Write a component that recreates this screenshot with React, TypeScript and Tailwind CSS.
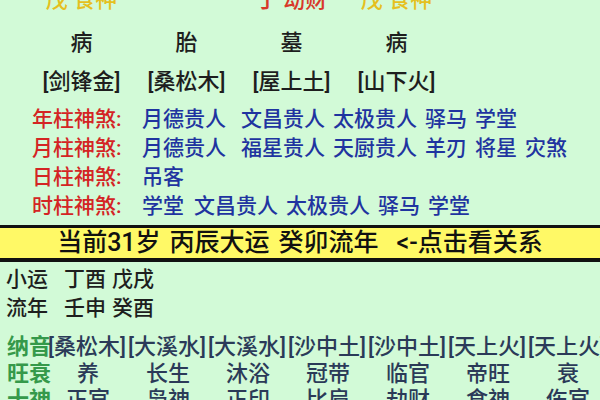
import React from "react";

const pillars = [
  { top: "戊 食神", topColor: "text-[#e5c01e]", state: "病", nayin: "[剑锋金]" },
  { top: "", topColor: "", state: "胎", nayin: "[桑松木]" },
  { top: "丁 劫财", topColor: "text-[#d8392a]", state: "墓", nayin: "[屋上土]" },
  { top: "戊 食神", topColor: "text-[#e5c01e]", state: "病", nayin: "[山下火]" },
];

const shensha = [
  { label: "年柱神煞:", items: ["月德贵人", "文昌贵人", "太极贵人", "驿马", "学堂"], first: "ml-[15px]" },
  { label: "月柱神煞:", items: ["月德贵人", "福星贵人", "天厨贵人", "羊刃", "将星", "灾煞"], first: "ml-[15px]" },
  { label: "日柱神煞:", items: ["吊客"], first: "ml-[15px]" },
  { label: "时柱神煞:", items: ["学堂", "文昌贵人", "太极贵人", "驿马", "学堂"], first: "ml-[10px]" },
];

const nayin = ["[桑松木]", "[大溪水]", "[大溪水]", "[沙中土]", "[沙中土]", "[天上火]", "[天上火]"];
const wangshuai = ["养", "长生", "沐浴", "冠带", "临官", "帝旺", "衰"];
const shishen = ["正官", "枭神", "正印", "比肩", "劫财", "食神", "伤官"];

function Words({ items, first }: { items: string[]; first: string }) {
  return (
    <>
      {items.map((w, i) => (
        <span key={i} className={i === 0 ? "" : i === 1 ? first : "ml-[8px]"}>
          {w}
        </span>
      ))}
    </>
  );
}

export default function App() {
  return (
    <div
      className="w-[600px] h-[400px] overflow-hidden bg-[#d2fad7] text-[#1e1e1e] font-medium"
      style={{ fontFamily: "Roboto, 'Noto Sans CJK SC', sans-serif" }}
    >
      {/* pillar summary */}
      <div className="grid grid-cols-[105px_105px_105px_105px] pl-[29px] mt-[-15px] h-[30px] leading-[30px] text-[22px]">
        {pillars.map((p, i) => (
          <div key={i} className={`text-center whitespace-pre ${p.topColor}`}>
            {p.top}
          </div>
        ))}
      </div>
      <div className="grid grid-cols-[105px_105px_105px_105px] pl-[29px] mt-[13px] h-[30px] leading-[30px] text-[22px]">
        {pillars.map((p, i) => (
          <div key={i} className="text-center">
            {p.state}
          </div>
        ))}
      </div>
      <div className="grid grid-cols-[105px_105px_105px_105px] pl-[29px] mt-[9px] h-[30px] leading-[30px] text-[22px]">
        {pillars.map((p, i) => (
          <div key={i} className="text-center">
            {p.nayin}
          </div>
        ))}
      </div>

      {/* shensha */}
      <div className="mt-[8px] text-[21px]">
        {shensha.map((s, i) => (
          <div key={i} className="flex h-[29px] leading-[29px] pl-[32px] whitespace-nowrap">
            <span className="w-[110px] text-[#d42424]">{s.label}</span>
            <span className="text-[#1f34a0]">
              <Words items={s.items} first={s.first} />
            </span>
          </div>
        ))}
      </div>

      {/* current luck banner */}
      <div className="mt-[4px] border-t-[3px] border-b-[4px] border-[#111] bg-[#fff966] h-[37px] flex justify-center items-center text-[25px] leading-[30px] text-[#111] whitespace-nowrap">
        <span>当前31岁</span>
        <span className="ml-[9px]">丙辰大运</span>
        <span className="ml-[9px]">癸卯流年</span>
        <span className="ml-[18px]">&lt;-点击看关系</span>
      </div>

      <div className="mt-[3px] pl-[6px] text-[21px]">
        <div className="flex h-[29px] leading-[29px]">
          <span className="w-[42px]">小运</span>
          <span className="ml-[16px]">丁酉</span>
          <span className="ml-[6px]">戊戌</span>
        </div>
        <div className="flex h-[29px] leading-[29px]">
          <span className="w-[42px]">流年</span>
          <span className="ml-[16px]">壬申</span>
          <span className="ml-[6px]">癸酉</span>
        </div>
      </div>

      {/* detail table */}
      <div className="mt-[10px] text-[22px] text-[#2b3a58]">
        <div className="grid grid-cols-[41px_80px_80px_80px_80px_80px_80px_80px] pl-[7px] h-[28px] leading-[28px] whitespace-nowrap">
          <span className="text-[#35994a] font-bold">纳音</span>
          {nayin.map((n, i) => (
            <span key={i}>{n}</span>
          ))}
        </div>
        <div className="grid grid-cols-[41px_80px_80px_80px_80px_80px_80px_80px] pl-[7px] h-[26px] leading-[26px] whitespace-nowrap">
          <span className="text-[#35994a] font-bold">旺衰</span>
          {wangshuai.map((n, i) => (
            <span key={i} className="text-center">
              {n}
            </span>
          ))}
        </div>
        <div className="grid grid-cols-[41px_80px_80px_80px_80px_80px_80px_80px] pl-[7px] h-[26px] leading-[26px] whitespace-nowrap">
          <span className="text-[#35994a] font-bold">十神</span>
          {shishen.map((n, i) => (
            <span key={i} className="text-center">
              {n}
            </span>
          ))}
        </div>
      </div>
    </div>
  );
}
